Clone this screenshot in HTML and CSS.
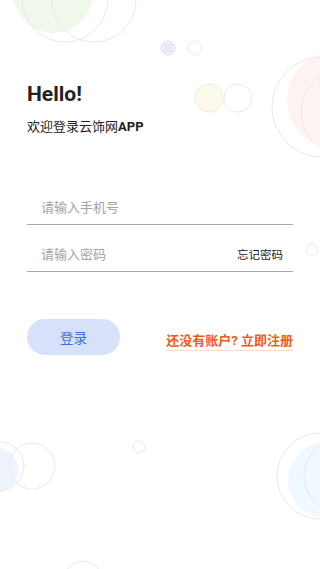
FILE: index.html
```html
<!DOCTYPE html>
<html lang="zh-CN">
<head>
    <meta charset="UTF-8">
    <meta name="viewport" content="width=device-width, initial-scale=1.0">
    <title>云饰网 登录</title>
    <link rel="stylesheet" href="styles.css">
</head>
<body>
    <div class="login-page">
        <!-- decorative bubbles -->
        <svg class="bubbles" viewBox="0 0 320 569" width="320" height="569" aria-hidden="true">
            <g fill="none" stroke="#e9e9ed" stroke-width="1">
                <circle cx="53" cy="-7" r="40" fill="#f0f8ec" stroke="none"/>
                <circle cx="65" cy="-1" r="43"/>
                <circle cx="94" cy="0" r="42"/>

                <circle cx="168" cy="48" r="7" fill="#eeedf7" stroke="#dedeee"/>
                <circle cx="168" cy="48" r="3" stroke="#dcdaee"/>
                <circle cx="195" cy="48" r="7"/>

                <circle cx="209" cy="98" r="14" fill="#fcfae9" stroke="#eeede4"/>
                <circle cx="238" cy="98" r="14"/>

                <circle cx="335" cy="100" r="48" fill="#fdf4f2" stroke="none"/>
                <circle cx="322" cy="107" r="50"/>
                <circle cx="345" cy="112" r="44"/>

                <circle cx="312" cy="250" r="6"/>

                <circle cx="-5" cy="470" r="23" fill="#eff3fc" stroke="none"/>
                <circle cx="0" cy="466" r="24"/>
                <circle cx="32" cy="466" r="23"/>

                <circle cx="139" cy="447" r="6"/>
                <circle cx="83" cy="580" r="19"/>

                <circle cx="326" cy="480" r="38" fill="#f0f9fd" stroke="none"/>
                <circle cx="320" cy="476" r="43"/>
                <circle cx="342" cy="476" r="38"/>
            </g>
        </svg>

        <div class="login-content">
            <h1 class="hello">Hello!</h1>
            <p class="welcome">欢迎登录云饰网<b>APP</b></p>

            <div class="form">
                <div class="field">
                    <input type="text" placeholder="请输入手机号">
                </div>
                <div class="field">
                    <input type="password" placeholder="请输入密码">
                    <a class="forgot" href="#">忘记密码</a>
                </div>
            </div>

            <div class="actions">
                <button class="btn-login">登录</button>
                <a class="register" href="#">还没有账户? 立即注册</a>
            </div>
        </div>
    </div>
</body>
</html>
```

FILE: styles.css
```css
/* ====== Base ====== */
* {
    box-sizing: border-box;
    margin: 0;
    padding: 0;
}

body {
    font-family: Roboto, "Noto Sans CJK SC", sans-serif;
    color: #222;
    background-color: #fff;
}

/* ====== Page ====== */
.login-page {
    position: relative;
    width: 320px;
    height: 569px;
    overflow: hidden;
    background-color: #fff;
}

.bubbles {
    position: absolute;
    top: 0;
    left: 0;
    z-index: 0;
}

.login-content {
    position: relative;
    z-index: 1;
    padding: 82px 27px 0;
}

/* ====== Heading ====== */
.hello {
    font-size: 21px;
    line-height: 24px;
    font-weight: 700;
    color: #222;
}

.welcome {
    margin-top: 12px;
    font-size: 13px;
    line-height: 18px;
    color: #222;
}

.welcome b {
    font-weight: 700;
}

/* ====== Form ====== */
.form {
    margin-top: 54px;
}

.field {
    display: flex;
    align-items: center;
    height: 35px;
    border-bottom: 1px solid #a8a8a8;
}

.field + .field {
    margin-top: 12px;
}

.field input {
    flex: 1;
    min-width: 0;
    height: 100%;
    padding-left: 14px;
    border: none;
    outline: none;
    background: transparent;
    font-family: inherit;
    font-size: 13px;
    color: #333;
}

.field input::placeholder {
    color: #a3a3a3;
}

.forgot {
    padding-right: 10px;
    font-size: 11.5px;
    color: #222;
    text-decoration: none;
}

/* ====== Actions ====== */
.actions {
    display: flex;
    justify-content: space-between;
    align-items: center;
    margin-top: 47px;
}

.btn-login {
    width: 93px;
    height: 36px;
    border: none;
    border-radius: 18px;
    background-color: #d7e2fa;
    font-family: inherit;
    font-size: 13.5px;
    color: #3f6fd8;
}

.register {
    margin-top: 6px;
    padding-bottom: 1px;
    font-size: 13px;
    font-weight: 700;
    color: #f25c14;
    text-decoration: none;
    border-bottom: 1px solid #fbd9c8;
}
```
